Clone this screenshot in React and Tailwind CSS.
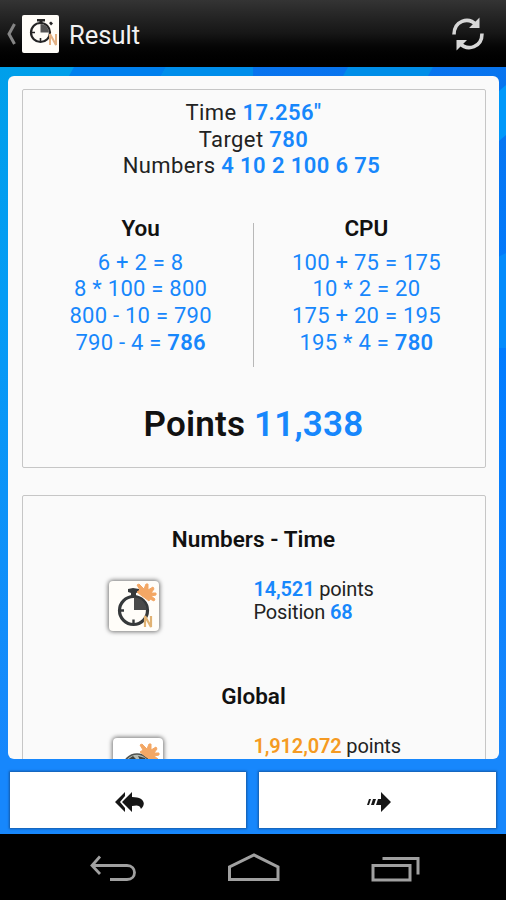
const solutions = [
  { name: "You", steps: ["6 + 2 = 8", "8 * 100 = 800", "800 - 10 = 790"], last: "790 - 4 = ", result: "786" },
  { name: "CPU", steps: ["100 + 75 = 175", "10 * 2 = 20", "175 + 20 = 195"], last: "195 * 4 = ", result: "780" },
];

function Backdrop() {
  return (
    <svg className="absolute inset-0 h-full w-full" viewBox="0 0 506 767" preserveAspectRatio="none">
      <defs>
        <linearGradient id="left" x1="0" y1="0" x2="0" y2="1">
          <stop offset="0" stopColor="#009fea" />
          <stop offset="0.3" stopColor="#049cf5" />
          <stop offset="0.9" stopColor="#1787fc" />
        </linearGradient>
        <linearGradient id="right" x1="0" y1="0" x2="0" y2="1">
          <stop offset="0" stopColor="#0874ee" />
          <stop offset="0.35" stopColor="#007bff" />
          <stop offset="0.9" stopColor="#1787fc" />
        </linearGradient>
      </defs>
      <rect width="253" height="767" fill="url(#left)" />
      <rect x="253" width="253" height="767" fill="url(#right)" />
      <path d="M74 0h92l-5 9H69z" fill="#0080ee" />
      <path d="M166 0h87v9h-92z" fill="#008eeb" />
      <path d="M348 0h85l-5 9h-85z" fill="#008ee8" />
      <path d="M506 18v50l-14 12V30z" fill="#0098fa" />
      <path d="M506 186v95h-14v-88z" fill="#048bfc" />
    </svg>
  );
}

function Crown() {
  return (
    <path
      d="M28 11l3-2-3-5 2-1 5 5 2-5 2 0 0 6 5-3 1 2-3 4 5 0v2l-5 1 4 3-1 2-4-2-1 2-4-3-3-2z"
      fill="#f3a765"
      stroke="#f3a765"
      strokeLinejoin="round"
    />
  );
}

function Stopwatch({ className }) {
  return (
    <svg className={className} viewBox="0 0 50 50" fill="none">
      <circle cx="24.500" cy="29.500" r="14" stroke="#36393b" strokeWidth="3.200" />
      <path d="M25 29V16.500a12.500 12.500 0 0 1 12.500 12.500z" fill="#4a4a4a" />
      <path d="M24.500 42.500v-4M11 29.500h4" stroke="#36393b" strokeWidth="2.400" />
      <path d="M19 8l5-1 6 1v3l-3 1v3h-5v-3l-3-1z" fill="#36393b" />
      <Crown />
      <path d="M36 46V35l6 11V35" stroke="#e1b273" strokeWidth="2.200" />
    </svg>
  );
}

// Small launcher version, without the crown
function AppIcon() {
  return (
    <svg className="h-[38px] w-[38px]" viewBox="0 0 38 38" fill="none">
      <circle cx="18.500" cy="17.500" r="9.500" stroke="#242424" strokeWidth="2.200" />
      <path d="M18.500 17.500V9a8.500 8.500 0 0 1 8.500 8.500z" fill="#555" />
      <path d="M18.500 26v-3M10 17.500h3" stroke="#242424" strokeWidth="1.600" />
      <path d="M15 4h8v2.500h-2.500V8h-3V6.500H15zM27 8l2-1.500 2 2-2 2z" fill="#242424" />
      <path d="M28 30V19l6 11V19" stroke="#e3b184" strokeWidth="2" />
    </svg>
  );
}

function Globe({ className }) {
  return (
    <svg className={className} viewBox="0 0 50 50" fill="none">
      <circle cx="24" cy="30" r="14" fill="#b6bbb3" stroke="#505350" strokeWidth="1.500" />
      <path d="M14 22l6-4 3 3-4 3zM25 18l7 2 2 5-7-3z" fill="#3e413e" />
      <g transform="translate(-1 3)">
        <Crown />
      </g>
    </svg>
  );
}

function Solution({ name, steps, last, result }) {
  return (
    <div className="flex flex-1 flex-col items-center">
      <h2 className="mb-[8px] text-[22.500px] leading-[27px] font-semibold tracking-normal text-[#111]">{name}</h2>
      {steps.map((step) => (
        <p key={step}>{step}</p>
      ))}
      <p>
        {last}
        <b className="font-semibold">{result}</b>
      </p>
    </div>
  );
}

export default function App() {
  return (
    <div className="flex h-[900px] w-[506px] flex-col overflow-hidden bg-black font-['Roboto',sans-serif] text-[#222]">
      <header className="flex h-[67px] shrink-0 items-center bg-linear-to-b from-[#343434] via-[#161616] to-black pl-[5px]">
        <svg className="h-[22px] w-[12px]" viewBox="0 0 12 22" fill="none">
          <path d="M9.500 1L4 11l5.500 10" stroke="#858585" strokeWidth="3" />
        </svg>
        <div className="ml-[5px] h-[38px] w-[37px] rounded-[2px] bg-[#fffdf8]">
          <AppIcon />
        </div>
        <h1 className="mt-[4px] ml-[10px] text-[25.500px] text-[#f2f2f2]">Result</h1>
        <svg className="mr-[21px] ml-auto h-[36px] w-[34px]" viewBox="0 0 34 36" fill="none">
          <path d="M3 18.500C3 5 17 0 25.500 9M31 17.500c0 13.500-14 18.500-22.500 9.500" stroke="#d6d6d6" strokeWidth="3.600" />
          <path d="M28.500 1.500v10.500H18zM5.500 34.500V24H16z" fill="#d6d6d6" />
        </svg>
      </header>

      <div className="relative h-[767px] shrink-0">
        <Backdrop />
        <div className="relative px-[8px] pt-[9px]">
          <main className="h-[683px] w-[491px] overflow-hidden rounded-[6px] bg-[#fafafa] px-[13.500px] pt-[13px]">
            <section className="h-[379px] rounded-[2px] border-[1.500px] border-[#c6c6c6] pt-[10px] text-center text-[22px] leading-[26.600px] tracking-[0.4px]">
              <p>Time <b className="font-semibold text-[#1787fc]">17.256"</b></p>
              <p>Target <b className="font-semibold text-[#1787fc]">780</b></p>
              <p className="mr-[4px]">Numbers <b className="font-semibold text-[#1787fc]">4 10 2 100 6 75</b></p>
              <div className="mt-[35px] flex tracking-[0.25px] text-[#1787fc]">
                <div className="flex flex-1 pl-[6px]">
                  <Solution {...solutions[0]} />
                </div>
                <div className="mt-[8px] h-[144px] w-[1.500px] bg-[#b8b8b8]" />
                <div className="flex flex-1 pr-[6px]">
                  <Solution {...solutions[1]} />
                </div>
              </div>
              <p className="mt-[37px] text-[35px] leading-[42px] font-semibold tracking-[0.2px] text-[#111]">
                Points <span className="text-[#1787fc]">11,338</span>
              </p>
            </section>

            <section className="mt-[27px] h-[400px] rounded-[2px] border-[1.500px] border-[#c6c6c6] pt-[30px] text-[20px] leading-[23px] tracking-[-0.15px]">
              <h2 className="text-center text-[22.500px] leading-[27px] font-semibold tracking-[0.05px] text-[#111]">Numbers - Time</h2>
              <div className="mt-[25px] flex">
                <div className="mt-[3px] ml-[86px] h-[50px] w-[50px] rounded-[4px] bg-[#fffdf9] shadow-[0_0_4px_1px_#777]">
                  <Stopwatch className="h-[50px] w-[50px]" />
                </div>
                <div className="ml-[95px]">
                  <p><b className="font-semibold text-[#1787fc]">14,521</b> points</p>
                  <p>Position <b className="font-semibold text-[#1787fc]">68</b></p>
                </div>
              </div>
              <h2 className="mt-[52px] text-center text-[22.500px] leading-[27px] font-semibold tracking-normal text-[#111]">Global</h2>
              <div className="mt-[25px] flex">
                <div className="mt-[3px] ml-[90px] h-[50px] w-[50px] rounded-[4px] bg-white shadow-[0_0_4px_1px_#777]">
                  <Globe className="h-[50px] w-[50px]" />
                </div>
                <p className="ml-[91px]"><b className="font-semibold text-[#f59a22]">1,912,072</b> points</p>
              </div>
            </section>
          </main>

          <div className="mt-[13px] ml-[2px] flex gap-[13px]">
            <button className="flex h-[56px] w-[236px] items-center justify-center bg-white shadow-[0_0_2px_1px_#1559a5]">
              <svg className="mt-[3px] ml-[3px] h-[20px] w-[30px]" viewBox="0 0 30 20" fill="#161616">
                <path d="M10 0L0 10l10 10v-4l-5-6 5-6zM17 0L7 10l10 10v-6c5-1 8-1 9 3 6-6 2-12-9-12z" />
              </svg>
            </button>
            <button className="flex h-[56px] w-[237px] items-center justify-center bg-white shadow-[0_0_2px_1px_#1559a5]">
              <svg className="mt-[3px] ml-[3px] h-[20px] w-[25px]" viewBox="0 0 25 20" fill="#161616">
                <path d="M14 0l10 10-10 10v-7H9l2-6h3zM2 7h2l-2 6H0zM6 7h3l-2 6H4z" />
              </svg>
            </button>
          </div>
        </div>
      </div>

      <nav className="flex flex-1 items-start bg-black pt-[18px] pl-[89px]">
        <svg className="mt-[3px] h-[28px] w-[48px]" viewBox="0 0 48 28" fill="none" stroke="#a0a0a0" strokeWidth="2.800">
          <path d="M11 1.500L3 10.500 11 19M3 10.500h35c10 0 10 14 0 14H21" />
        </svg>
        <svg className="ml-[90px] h-[30px] w-[54px]" viewBox="0 0 54 30" fill="none" stroke="#a0a0a0" strokeWidth="3">
          <path d="M2.500 27.500V15L27 3l24 12v12.500z" />
        </svg>
        <svg className="mt-[4px] ml-[90px] h-[26px] w-[50px]" viewBox="0 0 50 26" fill="none" stroke="#a0a0a0" strokeWidth="3">
          <path d="M2 9.500h37v14.500h-37zM11.500 2.500h35.500v16" />
        </svg>
      </nav>
    </div>
  );
}
